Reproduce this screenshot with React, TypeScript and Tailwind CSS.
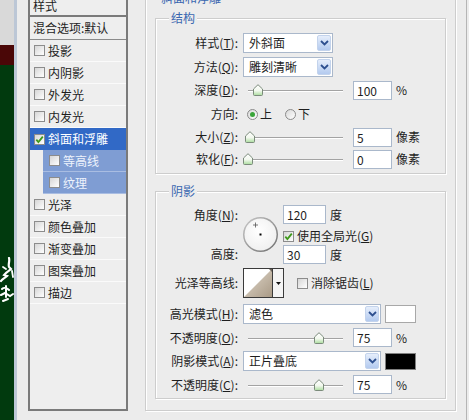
import React from "react";

const FONT = { fontFamily: '"Noto Sans CJK SC", "Noto Sans", sans-serif' };

function Check({ checked }: { checked?: boolean }) {
  return (
    <span className="w-[11px] h-[11px] border border-[#8c8c8c] bg-gradient-to-br from-[#d6d6d6] to-white flex items-center justify-center shrink-0">
      {checked && (
        <svg width="9" height="9" viewBox="0 0 9 9">
          <path d="M1.3 4.6 L3.4 7 L7.8 1.6" stroke="#3f9a1c" strokeWidth="1.8" fill="none" />
        </svg>
      )}
    </span>
  );
}

function Radio({ on }: { on?: boolean }) {
  return (
    <span className="w-[11px] h-[11px] rounded-full border border-[#8a8a8a] bg-gradient-to-br from-[#d8d8d8] to-white flex items-center justify-center shrink-0">
      {on && <span className="w-[5px] h-[5px] rounded-full bg-[#3aa53a]" />}
    </span>
  );
}

function Item({ label, kind, checked }: { label: string; kind?: "sel" | "sub"; checked?: boolean }) {
  if (kind === "sel")
    return (
      <div className="h-[22px] flex items-center pl-[4px] gap-[3px] bg-[#3169c6] text-white">
        <Check checked={checked} />
        <span>{label}</span>
      </div>
    );
  if (kind === "sub")
    return (
      <div className="h-[22px] pl-[13px]">
        <div className="h-full flex items-center pl-[6px] gap-[3px] bg-[#7f9dd3] text-[#eef3fc] border-b border-[#a9bde2]">
          <Check />
          <span>{label}</span>
        </div>
      </div>
    );
  return (
    <div className="h-[22px] flex items-center pl-[4px] gap-[3px] border-b border-[#fafafa]">
      <Check checked={checked} />
      <span>{label}</span>
    </div>
  );
}

function Chevron() {
  return (
    <svg width="9" height="6" viewBox="0 0 9 6">
      <path d="M1 1 L4.5 4.5 L8 1" stroke="#2d4f8f" strokeWidth="1.8" fill="none" />
    </svg>
  );
}

function Select({ value, w }: { value: string; w: string }) {
  return (
    <div className={`${w} h-[20px] border border-[#aab8cb] bg-white flex items-stretch`}>
      <span className="flex-1 pl-[5px] leading-[18px]">{value}</span>
      <span className="w-[14px] m-[1px] rounded-[2px] bg-gradient-to-b from-[#e6eefb] to-[#b3caef] border border-[#c3d3ec] flex items-center justify-center">
        <Chevron />
      </span>
    </div>
  );
}

function Input({ value, w = "w-[39px]" }: { value: string; w?: string }) {
  return (
    <div className={`${w} h-[19px] border border-[#aab8cb] bg-white pl-[3px] leading-[17px] shrink-0`}>{value}</div>
  );
}

function Slider({ frac }: { frac: number }) {
  return (
    <div className="relative w-[105px] h-[14px] shrink-0">
      <div className="absolute left-[5px] right-[5px] top-[7px] h-[1px] bg-[#a3a3a3]" />
      <div className="absolute left-[5px] right-[5px] top-[8px] h-[1px] bg-white" />
      <svg
        className="absolute top-[1px]"
        style={{ left: `${Math.round(frac * 95)}px` }}
        width="10"
        height="12"
        viewBox="0 0 10 12"
      >
        <defs>
          <linearGradient id="th" x1="0" y1="0" x2="0" y2="1">
            <stop offset="0" stopColor="#ffffff" />
            <stop offset="0.55" stopColor="#f2f8ee" />
            <stop offset="1" stopColor="#a9dc9c" />
          </linearGradient>
        </defs>
        <path d="M0.5 5 L5 0.7 L9.5 5 V10.5 Q9.5 11.5 8.5 11.5 H1.5 Q0.5 11.5 0.5 10.5 Z" fill="url(#th)" stroke="#7b8b7b" />
      </svg>
    </div>
  );
}

function Label({ children, className = "" }: { children: React.ReactNode; className?: string }) {
  return <div className={`w-[83px] shrink-0 text-right pr-[1px] ${className}`}>{children}</div>;
}

function Group({ title, children, className = "" }: { title: string; children: React.ReactNode; className?: string }) {
  return (
    <div className={`relative border border-[#cdcdcd] shadow-[inset_1px_1px_0_#ffffff,1px_1px_0_#ffffff] ${className}`}>
      <span className="absolute left-[13px] -top-[9px] px-[2px] leading-[16px] bg-[#ececec] text-[#3a67b0]">{title}</span>
      {children}
    </div>
  );
}

export default function App() {
  return (
    <div style={FONT} className="w-[469px] h-[420px] overflow-hidden flex bg-[#ececec] text-[12px] text-[#1e1e1e]">
      {/* background image strip */}
      <div className="w-[14px] flex flex-col shrink-0">
        <div className="h-[45px] bg-[#d9d9d9]" />
        <div className="h-[20px] bg-[#4a0707]" />
        <div className="flex-1 bg-[#013a0e] pt-[192px]">
          <svg width="14" height="56" viewBox="0 0 14 56" className="block">
            <path d="M9 1 C10 4 8 7 9 10 L11 12 C9 14 6 15 4 18 L7 19 C5 21 2 22 1 24" stroke="#fff" strokeWidth="2.2" fill="none" strokeLinecap="round" />
            <path d="M12 14 L13 20 M3 10 L6 12" stroke="#fff" strokeWidth="1.8" strokeLinecap="round" />
            <path d="M2 32 C4 30 7 31 9 33 M6 29 L6 40 M1 38 L5 36 L10 39 L13 37 M3 44 L8 42" stroke="#fff" strokeWidth="2" fill="none" strokeLinecap="round" />
          </svg>
        </div>
      </div>
      <div className="w-[3px] bg-[#bcc7d6] shrink-0" />

      {/* dialog */}
      <div className="flex pl-[11px] shrink-0">
        {/* styles list */}
        <div className="w-[100px] h-[416px] -mt-[5px] border-2 border-[#7a7a7a] bg-[#eeeeee] flex flex-col">
          <div className="h-[20px] flex items-center pl-[3px] border-b-2 border-[#7a7a7a]">样式</div>
          <div className="h-[23px] flex items-center pl-[3px] border-b border-[#8a8a8a]">混合选项:默认</div>
          <Item label="投影" />
          <Item label="内阴影" />
          <Item label="外发光" />
          <Item label="内发光" />
          <Item label="斜面和浮雕" kind="sel" checked />
          <Item label="等高线" kind="sub" />
          <Item label="纹理" kind="sub" />
          <Item label="光泽" />
          <Item label="颜色叠加" />
          <Item label="渐变叠加" />
          <Item label="图案叠加" />
          <Item label="描边" />
        </div>

        {/* right panel */}
        <div className="ml-[17px] w-[311px]">
          <Group title="斜面和浮雕" className="-mt-[2px] h-[413px] px-[9px] pt-[19px]">
            {/* 结构 */}
            <Group title="结构" className="pb-[4px]">
              <div className="flex items-center h-[20px] mt-[14px]">
                <Label>样式(<u>T</u>):</Label>
                <div className="ml-[4px]">
                  <Select value="外斜面" w="w-[90px]" />
                </div>
              </div>
              <div className="flex items-center h-[20px] mt-[4px]">
                <Label>方法(<u>Q</u>):</Label>
                <div className="ml-[4px]">
                  <Select value="雕刻清晰" w="w-[90px]" />
                </div>
              </div>
              <div className="flex items-center h-[20px] mt-[3px]">
                <Label>深度(<u>D</u>):</Label>
                <div className="ml-[4px]">
                  <Slider frac={0.1} />
                </div>
                <div className="ml-[5px]">
                  <Input value="100" />
                </div>
                <span className="ml-[4px]">%</span>
              </div>
              <div className="flex items-center h-[20px] mt-[4px]">
                <Label>方向:</Label>
                <div className="ml-[8px] flex items-center">
                  <Radio on />
                  <span className="ml-[2px]">上</span>
                  <span className="ml-[13px]">
                    <Radio />
                  </span>
                  <span className="ml-[2px]">下</span>
                </div>
              </div>
              <div className="flex items-center h-[20px] mt-[3px]">
                <Label>大小(<u>Z</u>):</Label>
                <div className="ml-[4px]">
                  <Slider frac={0.02} />
                </div>
                <div className="ml-[5px]">
                  <Input value="5" />
                </div>
                <span className="ml-[4px]">像素</span>
              </div>
              <div className="flex items-center h-[20px] mt-[2px]">
                <Label>软化(<u>F</u>):</Label>
                <div className="ml-[4px]">
                  <Slider frac={0} />
                </div>
                <div className="ml-[5px]">
                  <Input value="0" />
                </div>
                <span className="ml-[4px]">像素</span>
              </div>
            </Group>

            {/* 阴影 */}
            <Group title="阴影" className="mt-[17px] pt-[13px] pb-[4px]">
              <div className="flex">
                <Label className="flex flex-col">
                  <div className="h-[19px] leading-[19px]">角度(<u>N</u>):</div>
                  <div className="h-[19px] leading-[19px] mt-[20px]">高度:</div>
                </Label>
                <div className="ml-[3px] mt-[11px]">
                  <svg width="37" height="37" viewBox="0 0 37 37">
                    <defs>
                      <linearGradient id="ring" x1="0" y1="0" x2="1" y2="1">
                        <stop offset="0" stopColor="#c9c9c9" />
                        <stop offset="1" stopColor="#6d6d6d" />
                      </linearGradient>
                      <radialGradient id="face" cx="0.45" cy="0.4" r="0.6">
                        <stop offset="0" stopColor="#ffffff" />
                        <stop offset="1" stopColor="#f0f0f0" />
                      </radialGradient>
                    </defs>
                    <circle cx="18.5" cy="18.5" r="17.5" fill="url(#ring)" />
                    <circle cx="18.5" cy="18.5" r="16" fill="url(#face)" />
                    <rect x="17.5" y="17.5" width="2" height="2" fill="#000" />
                    <path d="M13.5 6.5 V11.5 M11 9 H16" stroke="#555" strokeWidth="0.8" />
                  </svg>
                </div>
                <div className="ml-[4px] flex flex-col">
                  <div className="flex items-center">
                    <Input value="120" w="w-[43px]" />
                    <span className="ml-[4px]">度</span>
                  </div>
                  <div className="flex items-center h-[14px] mt-[5px]">
                    <Check checked />
                    <span className="ml-[3px]">
                      使用全局光(<u>G</u>)
                    </span>
                  </div>
                  <div className="flex items-center mt-[2px]">
                    <Input value="30" w="w-[43px]" />
                    <span className="ml-[4px]">度</span>
                  </div>
                </div>
              </div>

              <div className="flex items-center h-[30px] mt-[4px]">
                <Label>光泽等高线:</Label>
                <div className="ml-[4px] flex">
                  <svg width="30" height="30" viewBox="0 0 30 30" className="block">
                    <defs>
                      <linearGradient id="ct" x1="0" y1="0" x2="1" y2="1">
                        <stop offset="0" stopColor="#e4dccf" />
                        <stop offset="1" stopColor="#a99a86" />
                      </linearGradient>
                    </defs>
                    <rect x="0.5" y="0.5" width="29" height="29" fill="#fff" stroke="#3a3a3a" />
                    <path d="M1 29 L29 1 L29 29 Z" fill="url(#ct)" />
                    <path d="M26 1 L29 1 L29 4 Z" fill="#6b6258" />
                    <rect x="0.5" y="0.5" width="29" height="29" fill="none" stroke="#3a3a3a" />
                  </svg>
                  <div className="w-[11px] h-[30px] border border-l-0 border-[#3a3a3a] bg-[#f4f4f4] flex items-center justify-center">
                    <svg width="5" height="3" viewBox="0 0 5 3">
                      <path d="M0 0 H5 L2.5 3 Z" fill="#111" />
                    </svg>
                  </div>
                </div>
                <div className="ml-[13px] flex items-center">
                  <Check />
                  <span className="ml-[3px]">
                    消除锯齿(<u>L</u>)
                  </span>
                </div>
              </div>

              <div className="flex items-center h-[20px] mt-[6px]">
                <Label>高光模式(<u>H</u>):</Label>
                <div className="ml-[4px]">
                  <Select value="滤色" w="w-[138px]" />
                </div>
                <div className="ml-[4px] w-[31px] h-[18px] border border-[#a8a8a8] bg-white" />
              </div>
              <div className="flex items-center h-[19px] mt-[4px]">
                <Label>不透明度(<u>O</u>):</Label>
                <div className="ml-[4px]">
                  <Slider frac={0.75} />
                </div>
                <div className="ml-[5px]">
                  <Input value="75" />
                </div>
                <span className="ml-[4px]">%</span>
              </div>
              <div className="flex items-center h-[20px] mt-[4px]">
                <Label>阴影模式(<u>A</u>):</Label>
                <div className="ml-[4px]">
                  <Select value="正片叠底" w="w-[138px]" />
                </div>
                <div className="ml-[4px] w-[31px] h-[17px] border border-[#808080] bg-black" />
              </div>
              <div className="flex items-center h-[19px] mt-[4px]">
                <Label>不透明度(<u>C</u>):</Label>
                <div className="ml-[4px]">
                  <Slider frac={0.75} />
                </div>
                <div className="ml-[5px]">
                  <Input value="75" />
                </div>
                <span className="ml-[4px]">%</span>
              </div>
            </Group>
          </Group>
        </div>
        <div className="w-[10px]" />
        <div className="w-[1px] bg-[#b5b5b5]" />
        <div className="w-[2px]" />
      </div>
    </div>
  );
}
